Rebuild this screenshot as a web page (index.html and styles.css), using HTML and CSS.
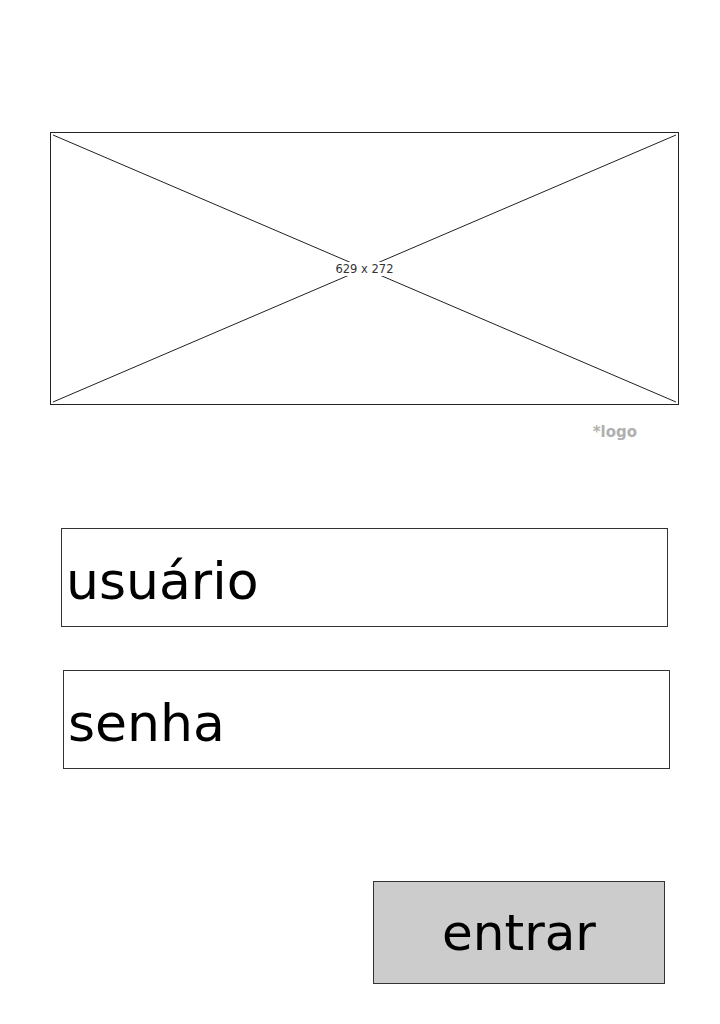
FILE: index.html
```html
<!DOCTYPE html>
<html lang="pt">
<head>
    <meta charset="UTF-8">
    <meta name="viewport" content="width=device-width, initial-scale=1.0">
    <title>Login</title>
    <link rel="stylesheet" href="styles.css">
</head>
<body>
    <div class="page">
        <div class="logo-box">
            <svg class="logo-cross" viewBox="0 0 627 271" preserveAspectRatio="none">
                <line x1="2" y1="2" x2="625" y2="269" />
                <line x1="625" y1="2" x2="2" y2="269" />
            </svg>
            <span class="logo-size">629 x 272</span>
        </div>
        <p class="logo-note">*logo</p>

        <div class="field field-user">usuário</div>
        <div class="field field-pass">senha</div>

        <div class="btn-row">
            <button type="button" class="btn">entrar</button>
        </div>
    </div>
</body>
</html>
```

FILE: styles.css
```css
body {
    margin: 0;
    padding: 0;
    background: #fff;
    font-family: 'DejaVu Sans', sans-serif;
    color: #000;
}

.page {
    width: 720px;
    padding-top: 132px;
}

.logo-box {
    position: relative;
    box-sizing: border-box;
    width: 629px;
    height: 273px;
    margin-left: 50px;
    border: 1px solid #222;
    display: flex;
    align-items: center;
    justify-content: center;
}

.logo-cross {
    position: absolute;
    inset: 0;
    width: 100%;
    height: 100%;
}

.logo-cross line {
    stroke: #222;
    stroke-width: 1;
}

.logo-size {
    position: relative;
    background: #fff;
    padding: 0 3px;
    font-size: 11.5px;
    line-height: 14px;
    color: #333;
}

.logo-note {
    margin: 17px 0 0;
    padding-right: 83px;
    height: 20px;
    line-height: 20px;
    text-align: right;
    font-size: 15px;
    font-weight: bold;
    color: #b0b0b0;
}

.field {
    box-sizing: border-box;
    width: 607px;
    height: 99px;
    border: 1px solid #333;
    display: flex;
    align-items: center;
    padding: 6px 0 0 4px;
    font-size: 52px;
}

.field-user {
    margin: 86px 0 0 61px;
}

.field-pass {
    margin: 43px 0 0 63px;
}

.btn-row {
    margin-top: 112px;
    padding-left: 373px;
}

.btn {
    box-sizing: border-box;
    width: 292px;
    height: 103px;
    background: #cccccc;
    border: 1px solid #333;
    border-radius: 0;
    font-family: 'DejaVu Sans', sans-serif;
    font-size: 50px;
    color: #000;
    padding: 0;
    cursor: pointer;
}
```
